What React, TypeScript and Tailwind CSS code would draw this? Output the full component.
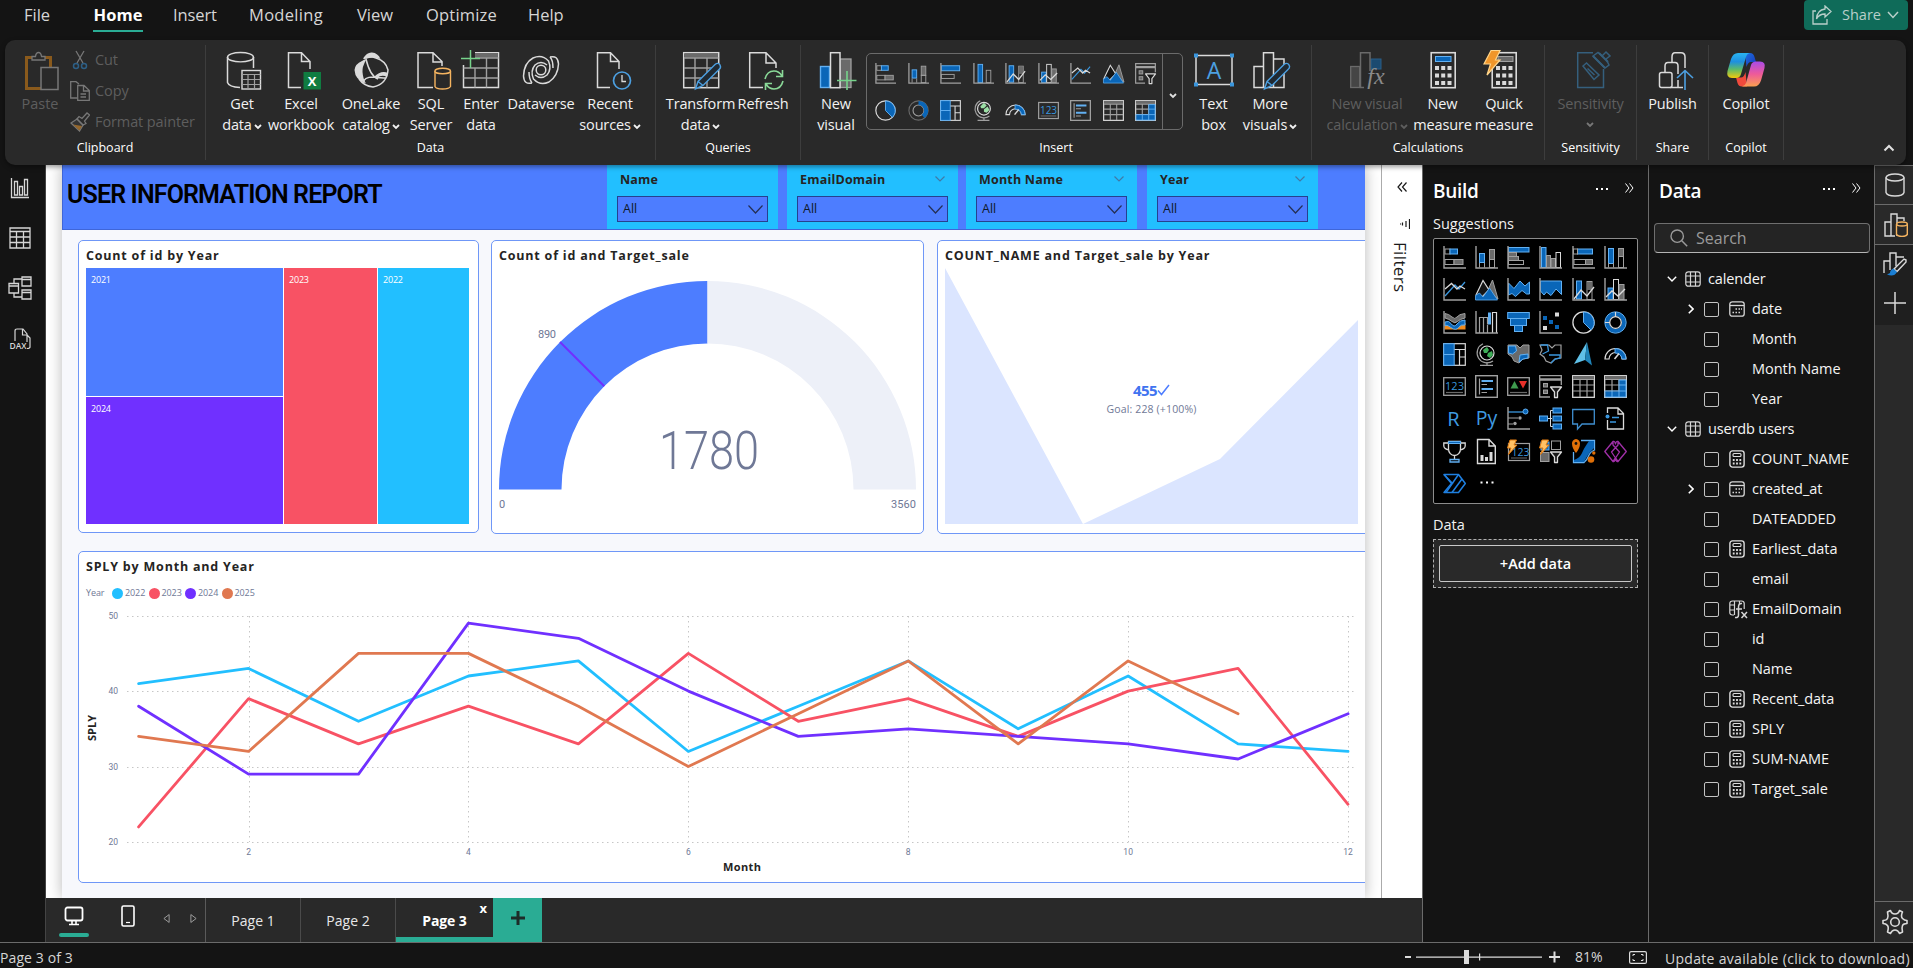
import type { ReactNode } from "react";

const G = "#a0a0a0";
const W = "#dadada";
const B = "#0a66b8";
const L = "#62b0f2";
const D = "#6a6a6a";

/* ---------- small chart icons, drawn on a 23px grid ---------- */

function Viz({ size, children }: { size: "sm" | "md"; children: ReactNode }) {
  return (
    <svg viewBox="0 0 23 23" fill="none" className={size === "sm" ? "h-[21px] w-[21px] overflow-visible" : "h-[23px] w-[23px] overflow-visible"}>
      {children}
    </svg>
  );
}

const Axes = () => <path d="M1 0V22H23" stroke={G} strokeWidth="1.4" />;

const bolt = (
  <path d="M3 0h6.5L7 5h3L1.5 14.5L4 8H0.5z" fill="#ffc266" stroke="#e07b10" strokeWidth="1" strokeLinejoin="round" />
);

const funnel = <path d="M11.5 12h11L18.500 17v5.500h-3V17z" fill="#1a1a1a" stroke={W} strokeWidth="1.3" strokeLinejoin="round" />;

const tableGrid = (
  <>
    <rect x=".7" y=".7" width="21.600" height="21.600" stroke={W} strokeWidth="1.3" />
    <rect x="1" y="1" width="21" height="3" fill={D} />
    <path d="M1 4.500H22M1 10H22M1 16H22M8 4.500V22M15 4.500V22" stroke={G} strokeWidth="1.200" />
  </>
);

const icons: Record<string, ReactNode> = {
  stackedBar: (
    <>
      <rect x="2" y="3" width="5" height="5" stroke={G} />
      <rect x="7" y="3" width="7.500" height="5" fill={B} stroke={L} />
      <rect x="2" y="13.500" width="9" height="5" stroke={G} />
      <rect x="11" y="13.500" width="9" height="5" fill={D} stroke={G} />
      <Axes />
    </>
  ),
  stackedCol: (
    <>
      <rect x="4.500" y="7.500" width="5" height="9" fill={B} stroke={L} />
      <path d="M4.500 17v4.500M9.500 17v4.500" stroke={G} />
      <rect x="14.500" y="3.500" width="5" height="10" fill={D} stroke={G} />
      <rect x="14.500" y="13.500" width="5" height="8" stroke={G} />
      <Axes />
    </>
  ),
  clusteredBar: (
    <>
      <rect x="1.500" y="1.500" width="20.500" height="4.500" fill={B} stroke={L} />
      <rect x="1.500" y="6.500" width="8" height="4" fill={D} stroke={G} />
      <rect x="1.500" y="10.500" width="10" height="4" fill={D} stroke={G} />
      <rect x="1.500" y="14.500" width="15" height="4" stroke={G} />
      <Axes />
    </>
  ),
  clusteredBarSm: (
    <>
      <rect x="1.500" y="3" width="20" height="5.500" fill={B} stroke={L} />
      <rect x="1.500" y="12.500" width="14" height="4.500" stroke={G} />
      <Axes />
    </>
  ),
  clusteredCol: (
    <>
      <rect x="2.500" y="1.500" width="4.500" height="20" fill={B} stroke={L} />
      <rect x="7.500" y="9.500" width="4" height="12" fill={D} stroke={G} />
      <rect x="12" y="12.500" width="4.500" height="9" fill={D} stroke={G} />
      <rect x="17" y="6.500" width="4.500" height="15" stroke={W} />
      <Axes />
    </>
  ),
  clusteredColSm: (
    <>
      <rect x="5.500" y="1.500" width="5" height="20" fill={B} stroke={L} />
      <rect x="14.500" y="8" width="5" height="13.500" stroke={G} />
      <Axes />
    </>
  ),
  fullBar: (
    <>
      <rect x="5.500" y="3" width="15" height="5" fill={B} stroke={L} />
      <rect x="1.500" y="3" width="4" height="5" stroke={G} />
      <rect x="2" y="13.500" width="11.500" height="5" stroke={G} />
      <rect x="13.500" y="13.500" width="7" height="5" fill={D} stroke={G} />
      <Axes />
    </>
  ),
  fullCol: (
    <>
      <rect x="4.500" y="2.500" width="5" height="15" fill={B} stroke={L} />
      <rect x="14.500" y="2.500" width="5" height="8" fill={D} stroke={G} />
      <rect x="14.500" y="10.500" width="5" height="11" stroke={G} />
      <path d="M4.500 17v4.500M9.500 17v4.500" stroke={G} />
      <Axes />
    </>
  ),
  line: (
    <>
      <path d="M2 18L12 7l4 4L22 4" stroke="#3a96dd" strokeWidth="1.300" />
      <path d="M2 11L8.500 5.500L14 11L17 8L22 11" stroke={W} strokeWidth="1.300" />
      <Axes />
    </>
  ),
  area: (
    <>
      <path d="M13 12L17.500 2L23 21z" fill={D} stroke={G} />
      <path d="M1 17L8 2.500L14 12L6 20z" stroke={W} strokeWidth="1.200" fill="#151515" />
      <path d="M.5 22V17.500L4.500 15L8 19L14.500 10L22.500 22z" fill={B} stroke={L} strokeWidth=".8" />
    </>
  ),
  stackedArea: (
    <>
      <path d="M1.500 5L7 10.500L13 3L18 8L22.500 4V16L19.500 16L15 12.500L8.500 18.500L5 15.500L1.500 17z" fill={B} stroke={L} strokeWidth="1" />
      <Axes />
    </>
  ),
  fullArea: (
    <>
      <path d="M1.500 3H22.500V16.500L17 11L12 17.500L7.500 14L5 17L1.500 13z" fill={B} stroke={L} strokeWidth="1" />
      <Axes />
    </>
  ),
  lineStacked: (
    <>
      <rect x="4.500" y="3" width="5" height="18" fill={B} stroke={L} />
      <rect x="15" y="3.500" width="5" height="18" stroke={G} />
      <path d="M15 4h5v8h-5z" fill={D} />
      <path d="M2 21L9 12l6 6l7-9" stroke={W} strokeWidth="1.400" />
      <Axes />
    </>
  ),
  lineClustered: (
    <>
      <rect x="4" y="10" width="5" height="11.500" fill={B} stroke={L} />
      <rect x="9.500" y="1.500" width="5" height="20" stroke={W} />
      <rect x="15" y="6.500" width="5" height="15" fill={D} stroke={G} />
      <path d="M2 19L8 13l6 5l7-7" stroke={W} strokeWidth="1.400" />
      <Axes />
    </>
  ),
  ribbon: (
    <>
      <path d="M1.500 18.500V12L7 16L11 18L16 15L22.500 12V18.500z" fill="#f08a1c" />
      <path d="M2 11Q6 9 8.500 13T14 13T22 9V14Q18 13 15.500 16.500T8 16.500T2 15z" fill={B} stroke={L} />
      <path d="M2 2.500Q6 3 9 6T14 6T22 2.500V7Q17 8 14.500 10.500T9 10.500T2 7z" fill={D} stroke={G} />
      <Axes />
    </>
  ),
  waterfall: (
    <>
      <path d="M4.500 22V6.500H8.500V22M12.500 22V13.500M8.500 6.500H12.500V13" stroke={G} strokeWidth="1.200" />
      <rect x="13" y="1.500" width="3" height="12" fill={L} />
      <path d="M17.500 22V1.500H21.500V22" stroke={W} strokeWidth="1.200" />
      <Axes />
    </>
  ),
  funnelChart: (
    <>
      <rect x=".7" y="1.500" width="21.600" height="6" fill={B} stroke={L} />
      <rect x="3.500" y="7.500" width="16" height="7" fill={B} stroke={L} />
      <rect x="7.500" y="14.500" width="8" height="6" fill={B} stroke={L} />
    </>
  ),
  scatter: (
    <>
      <path d="M4 5h4v4H4zM10 9h4v4h-4zM16 14h4v4h-4z" fill={B} />
      <path d="M16 1.500h4v4h-4zM4 15h4v4H4z" fill={W} />
      <Axes />
    </>
  ),
  pie: (
    <>
      <circle cx="11.500" cy="11.500" r="10.600" stroke={W} strokeWidth="1.300" />
      <path d="M11.500 1A10.600 10.600 0 0 1 19 19L11.500 11.500z" fill={B} stroke={L} />
    </>
  ),
  donut: (
    <>
      <circle cx="11.500" cy="11.500" r="8.500" stroke={B} strokeWidth="4.200" />
      <circle cx="11.500" cy="11.500" r="10.700" stroke={L} strokeWidth="1" />
      <circle cx="11.500" cy="11.500" r="5.800" stroke={W} strokeWidth="1.300" />
      <path d="M11.500 1V6M1 11.500H6" stroke={W} strokeWidth="1.200" />
    </>
  ),
  donutSm: (
    <>
      <circle cx="11.500" cy="11.500" r="10.500" stroke={D} strokeWidth="1.200" />
      <circle cx="11.500" cy="11.500" r="6" stroke={G} strokeWidth="1.200" />
      <path d="M11.500 3.300A8.200 8.200 0 0 1 16.500 18" stroke={B} strokeWidth="4.500" />
    </>
  ),
  treemap: (
    <>
      <rect x=".7" y=".7" width="21.600" height="21.600" stroke={W} strokeWidth="1.200" />
      <rect x=".7" y=".7" width="10.500" height="10.800" fill={B} stroke={L} />
      <rect x=".7" y="11.500" width="10.500" height="10.800" fill={B} stroke={L} />
      <path d="M11.500 6.500H22M16.500 6.500V22M16.500 14H22" stroke={W} strokeWidth="1.200" />
    </>
  ),
  map: (
    <>
      <circle cx="12" cy="10" r="7" stroke={W} strokeWidth="1.200" />
      <path d="M8 .8A10 10 0 1 0 18 18M12 19v3M5 22.300H18" stroke={G} strokeWidth="1.200" />
      <path d="M8 7l4-3l2 3l-2 3H9zM13 10l4-2l1 4l-3 3l-3-2z" fill="#3fae58" />
    </>
  ),
  mapSm: (
    <>
      <circle cx="12" cy="9.500" r="7" stroke={W} strokeWidth="1.300" />
      <path d="M8 .8A9.800 9.800 0 1 0 18 17.500M12 19v3M5 22.300H18" stroke={G} strokeWidth="1.300" />
      <path d="M8 7l4-4l3 3l-3 3H9zM12 10l4-3l2 4l-3 3l-3-1z" fill="#9ce0a6" />
    </>
  ),
  filledMap: (
    <>
      <path d="M1 2h9l3 3l3-3h6v13l-6 1l-4 4l-5-2l-2-4l-4-3z" fill={D} stroke={G} />
      <path d="M1.500 3h7l1 5l-4 3l-4-1zM13 12l8-1v4l-5 1l-4 3z" fill={B} stroke={L} />
    </>
  ),
  shapeMap: (
    <>
      <path d="M1 2h9l3 3l3-3h6v13l-6 1l-4 4l-5-2l-2-4l-4-3l2-4z" stroke={G} strokeWidth="1.200" />
      <path d="M1.500 2h7l1 6l-6 3M10 12h11v3l-5 1l-4 4" stroke="#3a96dd" strokeWidth="1.300" />
    </>
  ),
  azure: (
    <>
      <path d="M15 -1L2 21L13 17z" fill="#5fc0e8" />
      <path d="M15 -1L13 17L20 22.500z" fill="#1f83b8" />
    </>
  ),
  gauge: (
    <>
      <path d="M1 16A10.500 10.500 0 0 1 22 16H18A6.500 6.500 0 0 0 5 16z" stroke={W} strokeWidth="1.200" />
      <path d="M11 5.500A10.500 10.500 0 0 1 22 16H18A6.500 6.500 0 0 0 11 10z" fill={B} stroke={L} />
      <path d="M10.500 16L15 10.500" stroke={W} strokeWidth="1.600" />
    </>
  ),
  card: (
    <>
      <rect x=".7" y="2.700" width="21.600" height="17.600" stroke={G} strokeWidth="1.300" />
      <path d="M3 17.500H20" stroke={D} strokeWidth="1.200" />
      <text x="11.500" y="15" textAnchor="middle" fontSize="11" fill="#3a96dd" fontFamily="Open Sans, sans-serif">
        123
      </text>
    </>
  ),
  multiCard: (
    <>
      <rect x=".7" y=".7" width="21.600" height="21.600" stroke={G} strokeWidth="1.400" />
      <path d="M4.500 3.500V19.500" stroke={G} strokeWidth="1.200" />
      <path d="M6.500 6H18M6.500 14H18" stroke={L} strokeWidth="2" />
      <path d="M6.500 9.500H12M6.500 17.500H12" stroke={G} strokeWidth="1.200" />
    </>
  ),
  kpi: (
    <>
      <rect x=".7" y="2.700" width="21.600" height="17.600" stroke={G} strokeWidth="1.300" />
      <path d="M3 17.500H20" stroke={D} strokeWidth="1.200" />
      <path d="M3.500 13.500L7.500 6l4 7.500z" fill="#3f9b4e" />
      <path d="M12 6h8l-4 7.500z" fill="#e8302a" />
    </>
  ),
  slicer: (
    <>
      <path d="M11 22H.7V.7H22.300V10" stroke={G} strokeWidth="1.300" />
      <path d="M1 4.500H22" stroke={G} strokeWidth="2.500" />
      <rect x="4.500" y="8.500" width="4" height="3.500" fill={D} stroke={G} />
      <rect x="4.500" y="15" width="4" height="3.500" fill={D} stroke={G} />
      {funnel}
    </>
  ),
  table: tableGrid,
  matrix: (
    <>
      {tableGrid}
      <path d="M15.500 5H22V22H1.500V16.500H15.500z" fill={B} />
      <path d="M15 5H22V22H1V16H15zM15 10H22M8 16V22M15 16H22M15 16V22" stroke={L} strokeWidth="1" />
    </>
  ),
  r: (
    <text x="10.500" y="18.500" textAnchor="middle" fontSize="20" fontWeight="500" fill="#3f9be0" fontFamily="Open Sans, sans-serif">
      R
    </text>
  ),
  py: (
    <text x="11.500" y="17.500" textAnchor="middle" fontSize="19.500" fontWeight="500" fill="#3f9be0" fontFamily="Open Sans, sans-serif">
      Py
    </text>
  ),
  influencers: (
    <>
      <path d="M1 5H16" stroke="#3a96dd" strokeWidth="1.300" />
      <circle cx="18.500" cy="4.500" r="2.500" fill={B} stroke={L} />
      <path d="M1 11H11M1 17H6" stroke={G} />
      <circle cx="13" cy="11" r="1.700" fill={G} />
      <circle cx="8" cy="16.500" r="1.700" fill={G} />
      <Axes />
    </>
  ),
  decomposition: (
    <>
      <path d="M8 11.500H13M14 3.500H11.500V19.500H14" stroke={W} />
      <rect x=".5" y="9" width="8" height="5" fill={B} stroke={L} />
      <rect x="14" y="1" width="8.500" height="5" fill={B} stroke={L} />
      <rect x="14" y="9" width="8.500" height="5" fill={B} stroke={L} />
      <rect x="14" y="17" width="8.500" height="5" fill={B} stroke={L} />
    </>
  ),
  qna: <path d="M.7 2.500H22.300V17H10L5.500 22V17H.7z" stroke="#3f8fd0" strokeWidth="1.300" />,
  narrative: (
    <>
      <path d="M3.500 6V1H14L19.500 6.500V22H3.500V13M14 1V7H19.500" stroke={W} strokeWidth="1.300" />
      <circle cx="3.500" cy="9.500" r="2" fill="#3a96dd" />
      <path d="M8 10.500H15M6 15H12" stroke="#3a96dd" strokeWidth="1.300" />
    </>
  ),
  trophy: (
    <>
      <path d="M5.500 1.500H17.500V9A6 6.500 0 0 1 5.500 9zM5.500 3H.8V6Q1 9 6 10M17.500 3H22.200V6Q22 9 17 10M11.500 15V19" stroke={W} strokeWidth="1.300" />
      <path d="M5.500 1.500H17.500V3.500H5.500z" fill={B} stroke={L} />
      <path d="M7 19.500H16V22H7z" stroke={L} strokeWidth="1.300" />
    </>
  ),
  paginated: (
    <>
      <path d="M2.500 -.5H14L20.300 6V23.500H2.500zM14 -.5V6H20.300" stroke={W} strokeWidth="1.400" />
      <path d="M5.500 15h3v6h-3zM10 17h3v4h-3zM14.500 12h3v9h-3z" fill={W} />
    </>
  ),
  cardNew: (
    <>
      <rect x="1.500" y="3.500" width="21" height="17" stroke={G} strokeWidth="1.200" />
      <path d="M4 18H20" stroke={D} />
      <text x="13.500" y="15.500" textAnchor="middle" fontSize="10.500" fill="#3a96dd" fontFamily="Open Sans, sans-serif">
        123
      </text>
      {bolt}
    </>
  ),
  slicerNew: (
    <>
      <rect x="2" y="2" width="8" height="8" fill={B} stroke={L} />
      <rect x="12.500" y="1" width="9" height="8.500" stroke={G} />
      <rect x="1.500" y="12.500" width="8.500" height="9" fill={D} stroke={G} />
      {funnel}
      {bolt}
    </>
  ),
  arcgis: (
    <>
      <path d="M9 .5H22.500V10Q18 12 16.500 16T12 22.500H1.500V12" stroke={L} strokeWidth="1.300" />
      <path d="M17 1H22V8Q18 12 16 15T12 22H2V20Q8 18 10 13T17 1z" fill={B} />
      <path d="M4 -1A4.200 4.200 0 0 1 8 3.500Q8 8 4 13Q0 8 0 3.500A4.200 4.200 0 0 1 4 -1z" fill="#e07008" />
      <circle cx="4" cy="3.500" r="1.400" fill="#101010" />
      <circle cx="19" cy="19.500" r="3.300" fill="#e07008" />
      <circle cx="21.800" cy="13" r="1.700" fill="#e07008" />
    </>
  ),
  powerapps: (
    <g stroke="#a02fa8" strokeWidth="1.300" strokeLinejoin="round">
      <path d="M9 1.500L.8 11.500L9 21.500L11.500 18L15.500 12L9 5zM14 1.500L22.300 11.500L14 21.500L11.500 18L7.500 12L14 5z" />
      <path d="M9 1.500Q11 1 11.500 4Q12 1 14 1.500M9 21.500Q11 22 11.500 18Q12 22 14 21.500" />
    </g>
  ),
  automate: (
    <g stroke="#1f7fe0" strokeWidth="1.500" strokeLinejoin="round">
      <path d="M1 2.500H15.500L22.300 11.500L15.500 20.500H1L8.500 11.500z" />
      <path d="M1 2.500L10 12M15.500 2.500L3 20.500M19 7L9 20.500" />
    </g>
  ),
  more: <path d="M5.500 9.500h2v2h-2zM11 9.500h2v2h-2zM16.500 9.500h2v2h-2z" fill="#fff" />,
};

const galleryRows = [
  ["stackedBar", "stackedCol", "clusteredBarSm", "clusteredColSm", "lineStacked", "lineClustered", "line", "area", "slicer"],
  ["pie", "donutSm", "treemap", "mapSm", "gauge", "card", "multiCard", "table", "matrix"],
];

const buildRows = [
  ["stackedBar", "stackedCol", "clusteredBar", "clusteredCol", "fullBar", "fullCol"],
  ["line", "area", "stackedArea", "fullArea", "lineStacked", "lineClustered"],
  ["ribbon", "waterfall", "funnelChart", "scatter", "pie", "donut"],
  ["treemap", "map", "filledMap", "shapeMap", "azure", "gauge"],
  ["card", "multiCard", "kpi", "slicer", "table", "matrix"],
  ["r", "py", "influencers", "decomposition", "qna", "narrative"],
  ["trophy", "paginated", "cardNew", "slicerNew", "arcgis", "powerapps"],
  ["automate", "more"],
];

/* ---------- ribbon icons, drawn on a 40px grid ---------- */

const doc = <path d="M29 18V10.500L20.500 1.700H7.500V36.500H20M20.500 1.700V10.500H29" stroke={W} strokeWidth="1.500" />;

const calculator = (
  <>
    <rect x="8.200" y="1.700" width="24" height="35" stroke={W} strokeWidth="1.600" />
    <path d="M12 15h4v4h-4zM18.200 15h4v4h-4zM24.500 15h4v4h-4zM12 22.500h4v4h-4zM18.200 22.500h4v4h-4zM24.500 22.500h4v4h-4zM12 30h4v4h-4zM18.200 30h4v4h-4zM24.500 30h4v4h-4z" fill={W} />
  </>
);

const pencil = (
  <path d="M34 13.500Q37 11 39 14Q40.500 16.500 38 18.500L22 34.500L14.500 38L17 30.500zM17 30.500L22 34.500" fill="#202a33" stroke="#4c9fe0" strokeWidth="1.400" />
);

const big: Record<string, ReactNode> = {
  paste: (
    <>
      <rect x="6.500" y="6.500" width="24" height="31" stroke="#8a5a1c" strokeWidth="3" />
      <path d="M12 9V5.500H15.500Q16 1.500 18.500 1.500T21.500 5.500H25V9z" fill="#292929" stroke="#777" strokeWidth="1.300" />
      <rect x="21" y="16.500" width="17" height="22" fill="#292929" stroke="#777" strokeWidth="1.500" />
    </>
  ),
  database: (
    <>
      <ellipse cx="18.500" cy="6.200" rx="13" ry="4.700" stroke={W} strokeWidth="1.400" />
      <path d="M5.500 6V31.500Q7 36 18 36.500M31.500 6V17" stroke={W} strokeWidth="1.500" />
      <rect x="20" y="19.500" width="18.500" height="18.500" fill="#292929" stroke={W} strokeWidth="1.400" />
      <path d="M20 23.500H38.500M20 28.500H38.500M20 33.500H38.500M26 23.500V38M32.500 23.500V38" stroke={G} strokeWidth="1.200" />
    </>
  ),
  excel: (
    <>
      {doc}
      <rect x="22.500" y="21" width="17.500" height="17.500" fill="#107c41" />
      <text x="31.200" y="34.800" textAnchor="middle" fontSize="13" fontWeight="700" fill="#fff" fontFamily="Open Sans, sans-serif">
        X
      </text>
    </>
  ),
  onelake: (
    <>
      <path d="M12 7.500Q16 1 21 1.500Q27 2 29.500 8Q24 5.500 18 7Q13 8.500 12 7.500z" fill={W} />
      <path d="M11 10Q15 7 15 9Q11 16 11.500 21Q12 28 15 32.500Q4 29 3.500 19Q4 13 11 10z" fill={W} />
      <path d="M15 7Q18 4.500 25 7Q35 10 37 19Q36 33 22 36Q13 35 8 28M15 8Q19 25 27 28M12 32Q13 26 22 26Q31 27 35 27" stroke={W} strokeWidth="1.500" />
      <path d="M23 26Q30 19 37 22L36 26Q31 23 26 27z" fill={W} />
    </>
  ),
  sql: (
    <>
      <path d="M31 15V10.500L22 1.700H7V36.500H22M22 1.700V11H31" stroke={W} strokeWidth="1.500" />
      <path d="M24 20V35.500Q25 38 31.500 38T39.500 35.500V20" fill="#292929" stroke="#f5b460" strokeWidth="1.400" />
      <ellipse cx="31.700" cy="20" rx="7.800" ry="2.800" fill="#292929" stroke="#f5b460" strokeWidth="1.400" />
    </>
  ),
  enter: (
    <>
      <path d="M14 1.700H37.500V36.500H2.500V14" stroke={W} strokeWidth="1.500" />
      <path d="M14 2H37V6.500H14z" fill={D} />
      <path d="M14 7H37.500M2.500 17H37.500M2.500 27H37.500M14 17V36.500M25.500 7V36.500" stroke={G} strokeWidth="1.400" />
      <path d="M0 7.500H19M9.500 -1V17" stroke="#76d38a" strokeWidth="1.500" />
    </>
  ),
  dataverse: (
    <g stroke={W} strokeWidth="1.500">
      <circle cx="20" cy="19" r="4.800" />
      <path d="M29 6Q37 4 37.500 13Q37 25 28 31Q19 35 12.500 28Q9 20 14 14Q20 9 26 14" />
      <path d="M11 32Q3 34 2.500 25Q3 12 12 7Q21 3 27.500 10Q31 18 26 24Q20 29 14 24" />
      <path d="M29 6Q32 9 32 17M11 32Q8 28 8 21" />
    </g>
  ),
  recent: (
    <>
      {doc}
      <circle cx="32" cy="29.500" r="8.500" fill="#292929" stroke="#4c9fe0" strokeWidth="1.700" />
      <path d="M32 24V30.500H36" stroke={W} strokeWidth="1.300" />
    </>
  ),
  transform: (
    <>
      <rect x="2.700" y="1.700" width="35" height="35" stroke={W} strokeWidth="1.500" />
      <path d="M3 2.500H37V6.500H3z" fill={D} />
      <path d="M3 7H37.500M3 17H37.500M3 27H37.500M14 7V36.500M26 7V36.500" stroke={G} strokeWidth="1.400" />
      {pencil}
    </>
  ),
  refresh: (
    <>
      <path d="M33 17V12L23 1.700H6.700V36.500H20M23 1.700V12H33" stroke={W} strokeWidth="1.500" />
      <path d="M22 28Q24 20 31 20Q36 20 39 25M39.500 19V25.500H33M40 30Q38 38 31 38Q26 38 23 33M22.500 39V32.500H29" stroke="#8ad998" strokeWidth="1.600" />
    </>
  ),
  newVisual: (
    <>
      <rect x="24" y="8" width="11" height="28.500" fill={D} stroke={G} strokeWidth="1.300" />
      <rect x="4.500" y="15.500" width="9" height="21" fill={B} stroke={L} strokeWidth="1.400" />
      <rect x="14.500" y="1.700" width="9.500" height="35" fill="#292929" stroke={W} strokeWidth="1.500" />
      <path d="M21 29.500H40.500M31 20V39" stroke="#76d38a" strokeWidth="1.600" />
    </>
  ),
  textBox: (
    <>
      <rect x="2" y="4.500" width="36" height="29" stroke={W} strokeWidth="1.500" />
      <path d="M0 2.500h4v4H0zM36 2.500h4v4h-4zM0 31.500h4v4H0zM36 31.500h4v4h-4z" fill="#3a96dd" />
      <text x="20" y="28" textAnchor="middle" fontSize="23" fill="#4c9fe0" fontFamily="Open Sans, sans-serif">
        A
      </text>
    </>
  ),
  moreVisuals: (
    <>
      <path d="M13.500 36.500H4V15.500H13.500V1.700H23.500V36.500zM13.500 15.500V36.500M23.500 8H34V36.500H23.500" stroke={W} strokeWidth="1.500" />
      {pencil}
    </>
  ),
  newCalc: (
    <>
      <rect x="24" y="8" width="10" height="10" fill="#1b4a70" stroke="#2b5f88" />
      <rect x="3.700" y="15.500" width="9" height="21" fill="#454545" stroke="#6a6a6a" strokeWidth="1.300" />
      <path d="M17 36.500H13.500V1.700H23V20" fill="none" stroke="#6a6a6a" strokeWidth="1.500" />
      <text x="29" y="32.500" textAnchor="middle" fontSize="24" fontStyle="italic" fill="#8a8a8a" fontFamily="Liberation Serif, serif">
        fx
      </text>
    </>
  ),
  measure: (
    <>
      {calculator}
      <rect x="12.500" y="5.500" width="15.500" height="5" fill={B} stroke={L} />
    </>
  ),
  quick: (
    <>
      {calculator}
      <rect x="14" y="5.500" width="15" height="5" fill={D} stroke={G} />
      <path d="M7 -.5H16L11.500 9H16L3 24L6.500 13H0z" fill="#f0962a" stroke="#ffd58a" strokeWidth="1.200" />
    </>
  ),
  sensitivity: (
    <g stroke="#355f7d" strokeWidth="1.500">
      <path d="M22 1.700H6.700V36.500H32.500V18" />
      <path d="M12 15L15.500 12L28 24L23 28.500zM16.500 17.500L23.500 24" />
      <path d="M22 5L27 1.500L31 5L35 1L39 5L35 8L38 14L34 17z" fill="#292929" />
      <path d="M22 5L34 17M28 2L37 11M31 5L34 8" strokeWidth="2" />
    </g>
  ),
  publish: (
    <>
      <path d="M19 11.500V6Q19 1.700 22 1.700H28Q32 1.700 32 6V17M12 21V15Q12 11.500 15 11.500H22Q25 11.500 25 15V23M25 29V36.500" stroke={W} strokeWidth="1.500" />
      <rect x="6.500" y="21.500" width="12.500" height="15" rx="2" fill="#292929" stroke={W} strokeWidth="1.500" />
      <path d="M17 36.500H30" stroke={W} strokeWidth="1.500" />
      <path d="M24 27L32 19.500L40 27M32 19.500V39" stroke="#4c9fe0" strokeWidth="1.600" />
    </>
  ),
  copilot: (
    <>
      <defs>
        <linearGradient id="cpA" x1="0" y1="0" x2="0" y2="1">
          <stop offset="0" stopColor="#2ab4f0" />
          <stop offset=".35" stopColor="#1e8fe0" />
          <stop offset=".65" stopColor="#5cba6a" />
          <stop offset="1" stopColor="#f2c90c" />
        </linearGradient>
        <linearGradient id="cpB" x1="0" y1="0" x2="0" y2="1">
          <stop offset="0" stopColor="#a94be8" />
          <stop offset=".5" stopColor="#ee5a9a" />
          <stop offset="1" stopColor="#fba050" />
        </linearGradient>
        <linearGradient id="cpC" x1="0" y1="0" x2="1" y2="1">
          <stop offset="0" stopColor="#1d6fe0" />
          <stop offset="1" stopColor="#1836b8" />
        </linearGradient>
      </defs>
      <path d="M19 2H24Q27.500 2 28.500 6L30 11H25Q22 11 20.500 16z" fill="url(#cpC)" />
      <path d="M21 35.500H16Q12.500 35.500 11.500 32L10 26.500H15Q18 26.500 19.500 21z" fill="#f04a3c" />
      <path d="M12 2H24Q21 2.500 20 6L15 23Q14 27 10 27H6Q0 27 1.500 20L5 8Q7 2 12 2z" fill="url(#cpA)" />
      <path d="M28 35.500H16Q19 35 20 32L25 14Q26 10.500 30 10.500H34Q40 10.500 38.500 17L35 29.500Q33 35.500 28 35.500z" fill="url(#cpB)" />
    </>
  ),
};

function BigIcon({ name }: { name: string }) {
  return (
    <svg viewBox="0 0 40 40" fill="none" className="h-10 w-10 shrink-0 overflow-visible">
      {big[name]}
    </svg>
  );
}

function Caret({ className = "" }: { className?: string }) {
  return (
    <svg viewBox="0 0 8 6" fill="none" className={`inline-block h-[6px] w-[8px] ${className}`}>
      <path d="M1 1L4 4L7 1" stroke="currentColor" strokeWidth="1.800" />
    </svg>
  );
}

function Button({ icon, lines, caret, width, dim }: { icon: string; lines: string[]; caret?: boolean; width: string; dim?: boolean }) {
  return (
    <div className={`flex shrink-0 flex-col items-center ${width} ${dim ? "text-[#5e5e5e]" : "text-[#f2f2f2]"}`}>
      <BigIcon name={icon} />
      <div className="mt-[2px] flex flex-col items-center text-[14.500px] leading-[21px] tracking-[-0.15px] whitespace-nowrap">
        {lines.map((t, i) => (
          <span key={i} className="flex h-[21px] items-center">
            {t}
            {caret && i === lines.length - 1 && <Caret className={t ? "mt-1 ml-[2px]" : "text-[#777777]"} />}
          </span>
        ))}
      </div>
    </div>
  );
}

function Group({ label, width, pad = "", children }: { label: string; width: string; pad?: string; children: ReactNode }) {
  return (
    <div className="flex h-full shrink-0">
      <div className={`flex flex-col ${width}`}>
        <div className={`flex h-[98px] pt-[11px] ${pad}`}>{children}</div>
        <div className="text-center text-[12.500px] leading-5 text-white">{label}</div>
      </div>
      <div className="mt-[5px] h-[115px] w-px bg-[#3d3d3d]" />
    </div>
  );
}

function Ribbon() {
  return (
    <div className="relative z-20 mx-[5px] flex h-[125px] w-[1901px] shrink-0 rounded-[10px] bg-[#292929] shadow-[0_2px_5px_rgba(0,0,0,0.4)]">
      <Group label="Clipboard" width="w-[200px]" pad="pl-[16px]">
        <div className="flex w-full gap-[11px] text-[#5e5e5e]">
          <div className="flex w-[38px] flex-col items-center text-[14.500px]">
            <BigIcon name="paste" />
            <span className="mt-[2px] leading-[21px]">Paste</span>
          </div>
          <div className="-mt-[7px] flex flex-col text-[14.500px] tracking-[-0.1px] whitespace-nowrap">
            <div className="flex h-[33px] items-center gap-[5px]">
              <svg viewBox="0 0 20 20" fill="none" className="h-5 w-5">
                <path d="M6 1L13 13M14 1L7 13" stroke="#777" strokeWidth="1.300" />
                <circle cx="6" cy="16" r="2.500" stroke="#2d5f86" strokeWidth="1.500" />
                <circle cx="14" cy="16" r="2.500" stroke="#2d5f86" strokeWidth="1.500" />
              </svg>
              Cut
            </div>
            <div className="flex h-[33px] items-center gap-[5px]">
              <svg viewBox="0 0 20 20" fill="none" className="h-5 w-5">
                <path d="M7 17H.7V.7H6L9 3M7.700 4.500H14L19.300 9.500V19.300H7.700zM13.500 5V10H19M10.500 13H16M10.500 16H16" stroke="#777" strokeWidth="1.300" />
              </svg>
              Copy
            </div>
            <div className="flex h-[33px] items-center gap-[5px]">
              <svg viewBox="0 0 20 20" fill="none" className="h-5 w-5">
                <path d="M1 11L7 7L13 13L9.500 19z" fill="#333" stroke="#777" strokeWidth="1.300" />
                <path d="M3 12.500L12 14L9.500 18.500z" fill="#94672c" />
                <path d="M7 7L9 4.500L12 6.500L17 1L19.500 3L14.500 9L16 11.500L13 13z" stroke="#777" strokeWidth="1.300" />
              </svg>
              Format painter
            </div>
          </div>
        </div>
      </Group>
      <Group label="Data" width="w-[449px]" pad="pl-[7px]">
        <Button icon="database" lines={["Get", "data"]} caret width="w-[58px]" />
        <Button icon="excel" lines={["Excel", "workbook"]} width="w-[60px]" />
        <Button icon="onelake" lines={["OneLake", "catalog"]} caret width="w-[80px]" />
        <Button icon="sql" lines={["SQL", "Server"]} width="w-[40px]" />
        <Button icon="enter" lines={["Enter", "data"]} width="w-[60px]" />
        <Button icon="dataverse" lines={["Dataverse"]} width="w-[60px]" />
        <Button icon="recent" lines={["Recent", "sources"]} caret width="w-[78px]" />
      </Group>
      <Group label="Queries" width="w-[144px]" pad="pl-[9px]">
        <Button icon="transform" lines={["Transform", "data"]} caret width="w-[71px]" />
        <Button icon="refresh" lines={["Refresh"]} width="w-[54px]" />
      </Group>
      <Group label="Insert" width="w-[510px]" pad="pl-[9px]">
        <Button icon="newVisual" lines={["New", "visual"]} width="w-[52px]" />
        <div className="mt-[2px] ml-[4px] flex h-[77px] w-[317px] shrink-0 rounded-[5px] border border-[#6b6b6b]">
          <div className="flex w-[295px] flex-col gap-[16px] pt-[9px] pl-[8px]">
            {galleryRows.map((row, i) => (
              <div key={i} className="flex gap-[11.500px]">
                {row.map((n) => (
                  <Viz key={n} size="sm">
                    {icons[n]}
                  </Viz>
                ))}
              </div>
            ))}
          </div>
          <div className="flex flex-1 items-center justify-center border-l border-[#6b6b6b] pt-2 text-[#e0e0e0]">
            <Caret />
          </div>
        </div>
        <Button icon="textBox" lines={["Text", "box"]} width="w-[61px]" />
        <Button icon="moreVisuals" lines={["More", "visuals"]} caret width="w-[52px]" />
      </Group>
      <Group label="Calculations" width="w-[232px]" pad="pl-[10px]">
        <Button icon="newCalc" lines={["New visual", "calculation"]} caret width="w-[90px]" dim />
        <Button icon="measure" lines={["New", "measure"]} width="w-[61px]" />
        <Button icon="quick" lines={["Quick", "measure"]} width="w-[62px]" />
      </Group>
      <Group label="Sensitivity" width="w-[91px]" pad="justify-center">
        <Button icon="sensitivity" lines={["Sensitivity", ""]} caret width="w-[80px]" dim />
      </Group>
      <Group label="Share" width="w-[71px]" pad="justify-center">
        <Button icon="publish" lines={["Publish"]} width="w-[60px]" />
      </Group>
      <Group label="Copilot" width="w-[74px]" pad="justify-center">
        <Button icon="copilot" lines={["Copilot"]} width="w-[60px]" />
      </Group>
      <div className="flex flex-1 items-end justify-end pr-[11px] pb-[13px]">
        <svg viewBox="0 0 12 8" fill="none" className="h-[8px] w-[12px]">
          <path d="M1.500 6.500L6 2L10.500 6.500" stroke="#e0e0e0" strokeWidth="2" />
        </svg>
      </div>
    </div>
  );
}

function MenuBar() {
  const item = "block shrink-0 text-[#d6d6d6]";
  return (
    <div className="flex h-10 shrink-0 text-[16.500px] leading-[30px] whitespace-nowrap">
      <div className={`${item} ml-[24px] w-[69px]`}>File</div>
      <div className="w-[80px] shrink-0 font-bold text-white">
        <span className="block h-[32px] w-[50px] border-b-2 border-[#2aac94] text-center">Home</span>
      </div>
      <div className={`${item} w-[76px] tracking-[-0.1px]`}>Insert</div>
      <div className={`${item} w-[108px] tracking-[0.3px]`}>Modeling</div>
      <div className={`${item} w-[69px]`}>View</div>
      <div className={`${item} w-[102px] tracking-[0.2px]`}>Optimize</div>
      <div className={item}>Help</div>
      <div className="ml-auto mr-[5px] flex h-[30px] w-[104px] items-center rounded-[4px] bg-[#0f6b59] pl-[8px] text-[14.500px] text-[#b9cfca]">
        <svg viewBox="0 0 20 20" fill="none" className="mr-[10px] h-5 w-5">
          <path d="M4 6H1V19H15V14" stroke="currentColor" strokeWidth="1.300" />
          <path d="M13 1L19 6.500L13 12V9Q7 9 4.500 14Q5 5 13 4z" stroke="currentColor" strokeWidth="1.300" />
        </svg>
        Share
        <svg viewBox="0 0 12 8" fill="none" className="ml-[6px] h-[8px] w-[12px]">
          <path d="M1 1L6 6.500L11 1" stroke="currentColor" strokeWidth="1.500" />
        </svg>
      </div>
    </div>
  );
}

function LeftRail() {
  return (
    <div className="flex w-[46px] shrink-0 flex-col items-center border-r border-[#444444] pt-[12px] pr-[5px] text-[#d6d6d6]">
      <svg viewBox="0 0 20 22" fill="none" stroke="currentColor" strokeWidth="1.300" className="h-[22px] w-5">
        <path d="M1.500 1V20.500H19M4.500 4.500h3V18h-3zM9.500 9.500h3V18h-3zM14.500 2.500h3V18h-3z" />
      </svg>
      <svg viewBox="0 0 22 22" fill="none" stroke="currentColor" strokeWidth="1.300" className="mt-[28px] h-[22px] w-[22px]">
        <path d="M1 1H21V21H1zM1 4.500H21M1 10H21M1 15.500H21M7.500 4.500V21M14.500 4.500V21" />
      </svg>
      <svg viewBox="0 0 24 24" fill="none" stroke="currentColor" strokeWidth="1.300" className="mt-[27px] h-6 w-6">
        <path d="M14 1H23V10H14zM14 3.500H23M14 14H23V23H14zM14 16.500H23M1 7.500H10.500V17H1zM1 10H10.500M6 7.500V3H14M6 17V21H14" />
      </svg>
      <svg viewBox="0 0 24 24" fill="none" stroke="currentColor" strokeWidth="1.200" className="mt-[27px] h-6 w-6 overflow-visible">
        <path d="M7 14V4Q7 2 9 2H15L19 7V15M14.500 2V8H19M19 8L22 11V20Q22 21.500 19 21.500" />
        <text x="10" y="22" textAnchor="middle" fontSize="8.500" fill="currentColor" stroke="none" fontWeight="600" fontFamily="Open Sans, sans-serif">
          DAX
        </text>
      </svg>
    </div>
  );
}

function Slicer({ label, gap, arrow }: { label: string; gap: string; arrow?: boolean }) {
  return (
    <div className={`flex h-[64px] w-[171px] shrink-0 flex-col bg-[#22bfff] px-[10px] ${gap}`}>
      <div className="flex h-[31px] items-center justify-between pr-[3px] pl-[3px] text-[12.500px] font-bold tracking-[0.2px] text-[#252423]">
        {label}
        {arrow && (
          <svg viewBox="0 0 10 6" fill="none" className="-mt-1 h-[6px] w-[10px]">
            <path d="M.5 .5L5 5L9.500 .5" stroke="#3f7aa8" strokeWidth="1.200" />
          </svg>
        )}
      </div>
      <div className="flex h-[26px] items-center justify-between border border-[#26418f] bg-[#4d7dff] pr-[4px] pl-[5px] text-[12.500px] text-[#101828]">
        All
        <svg viewBox="0 0 15 9" fill="none" className="h-[9px] w-[15px]">
          <path d="M.5 .5L7.500 8L14.500 .5" stroke="#252f55" strokeWidth="1.200" />
        </svg>
      </div>
    </div>
  );
}

function CardTitle({ children }: { children: ReactNode }) {
  return <div className="text-[12.500px] leading-[18px] font-bold tracking-[0.8px] whitespace-nowrap text-[#252423]">{children}</div>;
}

const tile = "pt-[5px] pl-[5px] text-[9px] leading-[14px] tracking-[-0.2px] text-white";

function Treemap() {
  return (
    <div className="h-[293px] w-[401px] shrink-0 rounded-[5px] border border-[#6f97f7] bg-white px-[7px] pt-[6px]">
      <CardTitle>Count of id by Year</CardTitle>
      <div className="mt-[3px] flex h-[256px] gap-[1px]">
        <div className="flex w-[197px] flex-col gap-[1px]">
          <div className={`h-[128px] bg-[#4d7dff] ${tile}`}>2021</div>
          <div className={`flex-1 bg-[#7030ff] ${tile}`}>2024</div>
        </div>
        <div className={`w-[93px] bg-[#f85264] ${tile}`}>2023</div>
        <div className={`w-[91px] bg-[#22bfff] ${tile}`}>2022</div>
      </div>
    </div>
  );
}

function GaugeCard() {
  return (
    <div className="h-[294px] w-[433px] shrink-0 rounded-[5px] border border-[#6f97f7] bg-white px-[7px] pt-[6px]">
      <CardTitle>Count of id and Target_sale</CardTitle>
      <svg viewBox="499 265.500 417 264" className="h-[264px] w-[417px]" fontFamily="Roboto, sans-serif" fill="#6f7896">
        <path d="M499 490A208.500 208.500 0 0 1 707.500 281.500V344A146 146 0 0 0 561.500 490z" fill="#4d7dff" />
        <path d="M707.500 281.500A208.500 208.500 0 0 1 916 490H853.500A146 146 0 0 0 707.500 344z" fill="#edf0f8" />
        <path d="M560 342.500L604.300 386.800" stroke="#7030ff" strokeWidth="2" />
        <text x="556" y="338.500" textAnchor="end" fontSize="11" textLength="18">890</text>
        <text x="499" y="508" fontSize="11">0</text>
        <text x="916" y="508" textAnchor="end" fontSize="11" textLength="25">3560</text>
        <text x="659" y="469" fontSize="54" fontWeight="300" textLength="100" lengthAdjust="spacingAndGlyphs">1780</text>
      </svg>
    </div>
  );
}

function KpiCard() {
  return (
    <div className="h-[294px] w-[440px] shrink-0 rounded-[5px] border border-[#6f97f7] bg-white px-[7px] pt-[6px]">
      <CardTitle>COUNT_NAME and Target_sale by Year</CardTitle>
      <div className="mt-[3px] grid w-[413px]">
        <svg viewBox="0 0 413 256" className="col-start-1 row-start-1 h-[256px] w-[413px]">
          <path d="M0 0L138 256L275 191L413 52V256H0z" fill="#dbe5ff" />
        </svg>
        <div className="col-start-1 row-start-1 flex flex-col items-center pt-[112px]">
          <div className="flex items-center text-[15px] leading-5 font-bold tracking-[-0.5px] text-[#4073f0]">
            455
            <svg viewBox="0 0 13 12" fill="none" className="h-3 w-[13px]">
              <path d="M1 6.500L4.500 10.500L12 1" stroke="#4d7dff" strokeWidth="1.500" />
            </svg>
          </div>
          <div className="text-[10.500px] leading-[18px] tracking-[0.15px] text-[#6f7896]">Goal: 228 (+100%)</div>
        </div>
      </div>
    </div>
  );
}

const series = [
  { name: "2022", color: "#22bfff", data: [41, 43, 36, 42, 44, 32, 38, 44, 35, 42, 33, 32] },
  { name: "2023", color: "#f85264", data: [22, 39, 33, 38, 33, 45, 36, 39, 34, 40, 43, 25] },
  { name: "2024", color: "#7030ff", data: [38, 29, 29, 49, 47, 40, 34, 35, 34, 33, 31, 37] },
  { name: "2025", color: "#e07850", data: [34, 32, 45, 45, 38, 30, 37, 44, 33, 44, 37] },
];

const px = (m: number) => 138.6 + (m - 1) * 109.95;
const py = (v: number) => 843 - (v - 20) * 7.545;

function LineCard() {
  return (
    <div className="h-[332px] w-[1320px] shrink-0 rounded-[5px] border border-[#6f97f7] bg-white px-[7px] pt-[6px]">
      <CardTitle>SPLY by Month and Year</CardTitle>
      <div className="mt-[7px] flex h-[20px] items-center text-[9px] tracking-[-0.1px] text-[#6f7896]">
        <span className="w-[26px]">Year</span>
        {series.map((s) => (
          <span key={s.name} className="flex w-[36.500px] items-center gap-[2px]">
            <svg viewBox="0 0 10 10" className="h-[11px] w-[11px]">
              <circle cx="5" cy="5" r="5" fill={s.color} />
            </svg>
            {s.name}
          </span>
        ))}
      </div>
      <svg viewBox="86 604 1276 276" className="h-[276px] w-[1276px] overflow-visible" fill="none" fontFamily="Roboto, sans-serif">
        {[20, 30, 40, 50].map((v) => (
          <g key={v}>
            <path d={`M127 ${Math.round(py(v)) + 0.5}H1356`} stroke="#c6c6c6" strokeDasharray="1.500 3.500" />
            <text x="118" y={py(v) + 3} textAnchor="end" fontSize="8.500" fill="#6f7896">
              {v}
            </text>
          </g>
        ))}
        {[2, 4, 6, 8, 10, 12].map((m) => (
          <g key={m}>
            <path d={`M${Math.round(px(m)) + 0.5} 617V843`} stroke="#c6c6c6" strokeDasharray="1.500 3.500" />
            <text x={px(m)} y="856" textAnchor="middle" fontSize="8.500" fill="#6f7896">
              {m}
            </text>
          </g>
        ))}
        {series.map((s) => (
          <polyline key={s.name} points={s.data.map((v, i) => `${px(i + 1)},${py(v)}`).join(" ")} stroke={s.color} strokeWidth="2.800" strokeLinecap="round" strokeLinejoin="round" />
        ))}
        <text x="95.500" y="729" textAnchor="middle" fontSize="11" fontWeight="700" fill="#252423" transform="rotate(-90 95.500 729)" fontFamily="Open Sans, sans-serif">
          SPLY
        </text>
        <text x="742" y="872" textAnchor="middle" fontSize="11" fontWeight="700" fill="#252423" textLength="38" fontFamily="Open Sans, sans-serif">
          Month
        </text>
      </svg>
    </div>
  );
}

function Report() {
  return (
    <div className="flex h-[733px] w-[1335px] shrink-0 overflow-hidden bg-white pl-[16px]">
      <div className="h-[733px] w-[1303px] shrink-0 shadow-[0_0_14px_rgba(0,0,0,0.28)]">
        <div className="flex h-full w-full flex-col overflow-hidden bg-[#f7f8fc]">
          <div className="flex h-[65px] shrink-0 border-b border-l border-[#3f66d9] bg-[#4d7dff]">
            <div className="w-[544px] shrink-0 pt-[14px] pl-[4px] font-['Roboto'] text-[25px] leading-[31px] font-semibold tracking-[-0.85px] whitespace-nowrap text-black">
              USER INFORMATION REPORT
            </div>
            <Slicer label="Name" gap="" />
            <Slicer label="EmailDomain" gap="ml-[9px]" arrow />
            <Slicer label="Month Name" gap="ml-[8px]" arrow />
            <Slicer label="Year" gap="ml-[10px]" arrow />
          </div>
          <div className="mt-[10px] ml-[16px] flex shrink-0">
            <Treemap />
            <div className="ml-[12px] shrink-0">
              <GaugeCard />
            </div>
            <div className="ml-[13px] shrink-0">
              <KpiCard />
            </div>
          </div>
          <div className="mt-[17px] ml-[16px] shrink-0">
            <LineCard />
          </div>
        </div>
      </div>
    </div>
  );
}

function Filters() {
  return (
    <div className="flex h-[733px] w-[41px] shrink-0 flex-col items-center border-l border-[#ababab] bg-white text-[#1a1a1a]">
      <svg viewBox="0 0 10 10" fill="none" className="mt-[17px] h-[10px] w-[10px]">
        <path d="M5 .5L1 5L5 9.500M9.500 .5L5.500 5L9.500 9.500" stroke="currentColor" strokeWidth="1.200" />
      </svg>
      <svg viewBox="0 0 10 12" fill="none" className="mt-[26px] ml-[6px] h-[12px] w-[10px]">
        <path d="M9.500 1V11M6 3V9M2.500 4.500V7.500M.5 5.500V6.500" stroke="currentColor" strokeWidth="1.200" />
      </svg>
      <span className="mt-[12px] mr-[4px] text-[17px] leading-[22px] font-medium tracking-[0.35px] [writing-mode:vertical-rl]">Filters</span>
    </div>
  );
}

const tab = "flex h-full items-center justify-center border-r border-[#4a4a4a] text-[14px] text-[#e8e8e8]";

function PageTabs() {
  return (
    <div className="flex h-[44px] bg-[#292929]">
      <div className="flex w-[160px] border-r border-[#5a5a5a] pl-[13px] text-[#e8e8e8]">
        <div className="flex w-[30px] flex-col items-center pt-[8px]">
          <svg viewBox="0 0 20 20" fill="none" className="h-5 w-5">
            <rect x="1.500" y="1.500" width="17" height="13" rx="2" stroke="#fff" strokeWidth="1.800" />
            <path d="M8 15V18.500M12 15V18.500M5 18.500H15" stroke="#fff" strokeWidth="1.600" />
          </svg>
          <span className="mt-[7px] h-[4px] w-[30px] rounded-[2px] bg-[#2aac94]" />
        </div>
        <svg viewBox="0 0 14 22" fill="none" className="mt-[7px] ml-[32px] h-[22px] w-[14px]">
          <rect x="1" y="1" width="12" height="20" rx="1.500" stroke="#fff" strokeWidth="1.600" />
          <path d="M5 17.500H9" stroke="#fff" strokeWidth="1.200" />
        </svg>
        <svg viewBox="0 0 8 11" fill="none" className="mt-[15px] ml-[28px] h-[11px] w-[7px]">
          <path d="M7 1V10L1 5.500z" stroke="#aaaaaa" />
        </svg>
        <svg viewBox="0 0 8 11" fill="none" className="mt-[15px] ml-[20px] h-[11px] w-[7px]">
          <path d="M1 1V10L7 5.500z" stroke="#aaaaaa" />
        </svg>
      </div>
      <div className={`w-[95px] ${tab}`}>Page 1</div>
      <div className={`w-[95px] ${tab}`}>Page 2</div>
      <div className="relative flex w-[97px] items-center justify-center border-b-[5px] border-[#2aac94] pt-[5px] text-[14px] font-bold tracking-[-0.1px] text-white">
        Page 3
        <span className="absolute top-0 right-[6px] text-[13px] leading-5">x</span>
      </div>
      <div className="flex w-[49px] items-center justify-center bg-[#2aac94]">
        <svg viewBox="0 0 14 14" className="-mt-[5px] h-[14px] w-[14px]">
          <path d="M7 0V14M0 7H14" stroke="#1d2b28" strokeWidth="3" />
        </svg>
      </div>
    </div>
  );
}

function PaneHead({ title, tail }: { title: string; tail: string }) {
  return (
    <div className="flex h-[32px] items-center text-white">
      <span className="text-[19px] leading-[30px] font-semibold tracking-[-0.3px]">{title}</span>
      <svg viewBox="0 0 14 4" className="mr-[16px] mb-[5px] ml-auto h-[4px] w-[14px]">
        <path d="M1 1h2v2H1zM6 1h2v2H6zM11 1h2v2h-2z" fill="#fff" />
      </svg>
      <svg viewBox="0 0 9 10" fill="none" className={`mb-[6px] h-[10px] w-[9px] ${tail}`}>
        <path d="M.5 .5L4 5L.5 9.500M4.500 .5L8 5L4.500 9.500" stroke="#fff" />
      </svg>
    </div>
  );
}

function BuildPane() {
  return (
    <div className="flex h-[777px] w-[226px] shrink-0 flex-col border-l border-[#6b6b6b] bg-[#141414] pl-[10px]">
      <div className="pt-[10px]">
        <PaneHead title="Build" tail="mr-[14px]" />
      </div>
      <div className="mt-[6px] text-[14.500px] leading-[22px] text-[#f2f2f2]">Suggestions</div>
      <div className="mt-[3px] flex h-[266px] w-[205px] flex-col gap-[9.300px] rounded-[2px] border border-[#8c8c8c] bg-black pt-[7px] pl-[8.500px]">
        {buildRows.map((row, i) => (
          <div key={i} className="flex gap-[9.300px]">
            {row.map((n) => (
              <Viz key={n} size="md">
                {icons[n]}
              </Viz>
            ))}
          </div>
        ))}
      </div>
      <div className="mt-[10px] text-[14.500px] leading-[22px] text-[#f2f2f2]">Data</div>
      <div className="mt-[3px] h-[49px] w-[205px] border border-dashed border-[#b0b0b0] bg-[#292929] p-[5px]">
        <div className="flex h-full items-center justify-center rounded-[2px] border border-[#c8c8c8] text-[14.500px] font-semibold text-white">+Add data</div>
      </div>
    </div>
  );
}

function TableIcon() {
  return (
    <svg viewBox="0 0 16 16" fill="none" stroke="#d6d6d6" strokeWidth="1.200" className="h-4 w-4">
      <rect x=".8" y=".8" width="14.400" height="14.400" rx="2.500" />
      <path d="M.8 5H15.200M.8 11H15.200M5.500 1V15M10.500 1V15" />
    </svg>
  );
}

function CalendarIcon() {
  return (
    <svg viewBox="0 0 16 16" fill="none" stroke="#d6d6d6" strokeWidth="1.300" className="h-4 w-4">
      <rect x=".8" y=".8" width="14.400" height="14.400" rx="2.500" />
      <path d="M1 4.500H15" />
      <path d="M6.500 8h1.500M9.500 8H11M12 8h1M3.500 11.500H5M6.500 11.500H8M9.500 11.500H11" strokeWidth="1.500" />
    </svg>
  );
}

function CalcIcon() {
  return (
    <svg viewBox="0 0 16 18" fill="none" stroke="#dedede" strokeWidth="1.400" className="h-[18px] w-4">
      <rect x=".9" y=".9" width="14.200" height="16.200" rx="2.500" />
      <rect x="4" y="3.500" width="8" height="3" rx="1" strokeWidth="1.100" />
      <path d="M3.800 10h1.800M7.100 10h1.800M10.400 10h1.800M3.800 13.500h1.800M7.100 13.500h1.800M10.400 13.500h1.800" strokeWidth="1.800" />
    </svg>
  );
}

function FxIcon() {
  return (
    <svg viewBox="0 0 19 19" fill="none" stroke="#d6d6d6" strokeWidth="1.200" className="h-[19px] w-[19px]">
      <path d="M5 15H3.500Q.8 15 .8 12.500V3.500Q.8 1 3.500 1H12.500Q15.200 1 15.200 3.500V9M1 5H6M5.500 1V15M10.500 1V4M1 10H5" />
      <path d="M13 3.500Q9.500 3 9.500 7V15Q9.500 18 6 17.500M7 9H13" strokeWidth="1.500" />
      <path d="M12.500 12L18 18M18 12L12.500 18" strokeWidth="1.500" />
    </svg>
  );
}

type Field = { name: string; icon?: "cal" | "calc" | "fx"; open?: boolean };

const tables: { name: string; fields: Field[] }[] = [
  {
    name: "calender",
    fields: [{ name: "date", icon: "cal", open: true }, { name: "Month" }, { name: "Month Name" }, { name: "Year" }],
  },
  {
    name: "userdb users",
    fields: [
      { name: "COUNT_NAME", icon: "calc" },
      { name: "created_at", icon: "cal", open: true },
      { name: "DATEADDED" },
      { name: "Earliest_data", icon: "calc" },
      { name: "email" },
      { name: "EmailDomain", icon: "fx" },
      { name: "id" },
      { name: "Name" },
      { name: "Recent_data", icon: "calc" },
      { name: "SPLY", icon: "calc" },
      { name: "SUM-NAME", icon: "calc" },
      { name: "Target_sale", icon: "calc" },
    ],
  },
];

function DataPane() {
  return (
    <div className="flex h-[777px] w-[226px] shrink-0 flex-col border-l border-[#6b6b6b] bg-[#141414]">
      <div className="pt-[10px] pl-[10px]">
        <PaneHead title="Data" tail="mr-[13px]" />
      </div>
      <div className="mt-[16px] ml-[5px] flex h-[30px] w-[216px] items-center rounded-[4px] border border-[#6f6f6f] border-b-[#b5b5b5] bg-[#242424] pl-[15px] text-[16px] text-[#9a9a9a]">
        <svg viewBox="0 0 18 18" fill="none" className="mr-[8px] h-[18px] w-[18px]">
          <circle cx="7.200" cy="7.200" r="6.200" stroke="currentColor" strokeWidth="1.400" />
          <path d="M11.800 11.800L17.200 17.200" stroke="currentColor" strokeWidth="1.500" />
        </svg>
        Search
      </div>
      <div className="mt-[11px] flex flex-col text-[14.500px] text-[#f5f5f5]">
        {tables.map((t) => (
          <div key={t.name}>
            <div className="flex h-[30px] items-center pl-[18px]">
              <svg viewBox="0 0 10 6" fill="none" className="mr-[8px] h-[6px] w-[10px]">
                <path d="M.8 .8L5 5L9.200 .8" stroke="#fff" strokeWidth="1.400" />
              </svg>
              <TableIcon />
              <span className="ml-[7px] tracking-[-0.15px]">{t.name}</span>
            </div>
            {t.fields.map((f) => (
              <div key={f.name} className="flex h-[30px] items-center pl-[39px]">
                <span className="flex w-[16px] items-center">
                  {f.open && (
                    <svg viewBox="0 0 6 10" fill="none" className="h-[10px] w-[6px]">
                      <path d="M.8 .8L5 5L.8 9.200" stroke="#fff" strokeWidth="1.600" />
                    </svg>
                  )}
                </span>
                <span className="h-[15px] w-[15px] rounded-[2px] border border-[#c4c4c4]" />
                <span className="ml-[10px] flex h-5 w-[23px] items-center">
                  {f.icon === "cal" && <CalendarIcon />}
                  {f.icon === "calc" && <CalcIcon />}
                  {f.icon === "fx" && <FxIcon />}
                </span>
                <span className="tracking-[-0.05px] whitespace-nowrap">{f.name}</span>
              </div>
            ))}
          </div>
        ))}
      </div>
    </div>
  );
}

function RightRail() {
  return (
    <div className="flex h-[777px] w-[39px] shrink-0 flex-col border-l border-[#6b6b6b] bg-[#292929]">
      <div className="flex h-[40px] items-center justify-center border-y border-[#6b6b6b] pb-px pl-[2px]">
        <svg viewBox="0 0 20 24" fill="none" stroke={W} strokeWidth="1.400" className="h-6 w-5">
          <ellipse cx="10" cy="4.500" rx="9" ry="3.500" />
          <path d="M1 4.500V19.500Q2 23 10 23T19 19.500V4.500" />
        </svg>
      </div>
      <div className="flex h-[40px] items-center justify-center border-b border-[#6b6b6b] pl-[3px]">
        <svg viewBox="0 0 24 24" fill="none" stroke={W} strokeWidth="1.400" className="h-6 w-6">
          <path d="M11 23H1V9H7V23M7 9V1H13V23M13 5H20V8" />
          <path d="M12.500 11V21.500Q14 23.500 18 23.500T23.300 21.500V11" fill="#292929" stroke="#f5b460" />
          <ellipse cx="18" cy="11" rx="5.300" ry="2" fill="#292929" stroke="#f5b460" />
        </svg>
      </div>
      <div className="flex h-[80px] flex-col items-center bg-[#1f1f1f] pt-[7px] pl-[2px]">
        <svg viewBox="0 0 24 24" fill="none" stroke={W} strokeWidth="1.400" className="h-6 w-6 overflow-visible">
          <path d="M1 21V9H7V18M7 9V1H13V14M13 5H21" />
          <path d="M23 8L21 7L11 17L14 19.500L23 10z" fill="#1f1f1f" />
          <path d="M10.500 16.500Q7 18 7 21L4 22.500Q11 25.500 14 20z" fill="#1b7fd4" stroke="none" />
        </svg>
        <svg viewBox="0 0 22 22" className="mt-[16px] h-[22px] w-[22px]">
          <path d="M11 0V22M0 11H22" stroke={W} strokeWidth="1.500" />
        </svg>
      </div>
      <div className="mt-auto flex h-[41px] items-center justify-center border-t border-[#6b6b6b] bg-[#292929] pl-[2px]">
        <svg viewBox="0 0 26 26" fill="none" stroke={W} strokeWidth="1.600" strokeLinejoin="round" className="h-[26px] w-[26px]">
          <circle cx="13" cy="13" r="4.300" />
          <path d="M8.500 1.500Q9.500 5 13 5T17.500 1.500L20.500 3Q18.500 7.500 20.500 9.500T25 11.500V14.500Q21.500 14.500 20.500 16.500T20.500 23L17.500 24.500Q16 21 13 21T8.500 24.500L5.500 23Q7 18.500 5.500 16.500T1 14.500V11.500Q4.500 11.500 5.500 9.500T5.500 3z" />
        </svg>
      </div>
    </div>
  );
}

function StatusBar() {
  return (
    <div className="flex h-[26px] shrink-0 items-center overflow-hidden border-t border-[#6b6b6b] bg-[#141414] text-[14px] whitespace-nowrap text-[#d6d6d6]">
      <span className="w-[1404px] pt-[4px] tracking-[0.1px]">Page 3 of 3</span>
      <svg viewBox="0 0 156 14" className="mt-[2px] h-[14px] w-[156px]" fill="#dcdcdc">
        <path d="M1 6h6v2H1zM12 6.500h126v1.200H12zM60 0h5v14h-5zM75 3.500h1.200v7H75zM145 6h11v2h-11zM149.500 1.500h2v11h-2z" />
      </svg>
      <span className="ml-[15px] w-[54px] pt-[1px]">81%</span>
      <svg viewBox="0 0 18 13" fill="none" stroke="#dcdcdc" className="mt-[4px] h-[13px] w-[18px]">
        <rect x=".6" y=".6" width="16.800" height="11.800" rx="1.500" strokeWidth="1.200" />
        <path d="M4 5V3.500H6M12 3.500H14V5M14 8V9.500H12M6 9.500H4V8" />
      </svg>
      <span className="ml-[18px] pt-[5px] tracking-[0.3px]">Update available (click to download)</span>
    </div>
  );
}

export default function App() {
  return (
    <div className="flex h-[968px] w-[1913px] flex-col overflow-hidden bg-[#141414] font-['Open_Sans','Noto_Sans',sans-serif]">
      <MenuBar />
      <Ribbon />
      <div className="flex h-[777px] shrink-0">
        <LeftRail />
        <div className="flex w-[1376px] shrink-0 flex-col">
          <div className="flex">
            <Report />
            <Filters />
          </div>
          <PageTabs />
        </div>
        <BuildPane />
        <DataPane />
        <RightRail />
      </div>
      <StatusBar />
    </div>
  );
}
